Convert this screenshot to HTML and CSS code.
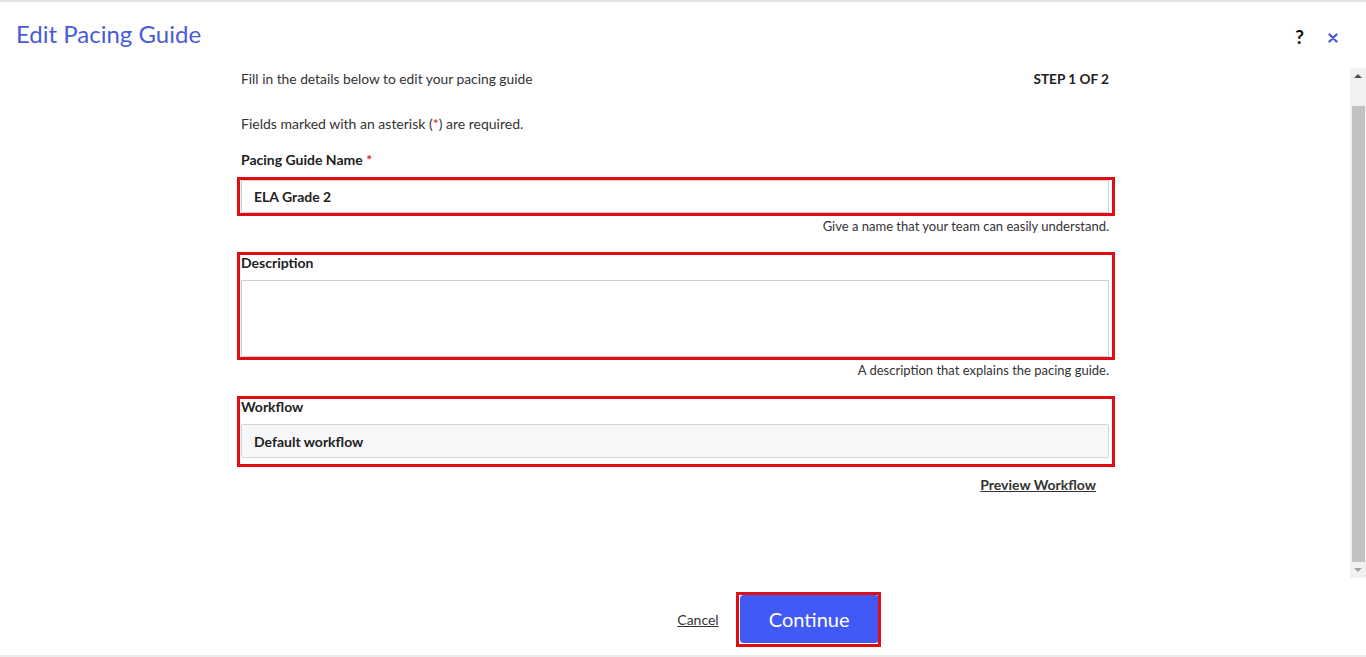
FILE: index.html
```html
<!DOCTYPE html>
<html lang="en">
<head>
    <meta charset="UTF-8">
    <title>Edit Pacing Guide</title>
    <link rel="stylesheet" href="styles.css">
</head>
<body>

<div class="modal">
    <header class="modal-head">
        <h1>Edit Pacing Guide</h1>
        <div class="head-tools">
            <span class="help">?</span>
            <span class="close">
                <svg width="10" height="10" viewBox="0 0 10 10">
                    <path d="M1.5 1.5 L8.5 8.5 M8.5 1.5 L1.5 8.5" stroke="#4a5bd8" stroke-width="2.4" stroke-linecap="round"/>
                </svg>
            </span>
        </div>
    </header>

    <div class="modal-body">
        <div class="scroll-pane">
            <form class="form">
                <div class="intro">
                    <span>Fill in the details below to edit your pacing guide</span>
                    <strong>STEP 1 OF 2</strong>
                </div>
                <p class="required-note">Fields marked with an asterisk (<span class="req">*</span>) are required.</p>

                <label class="field-label first" for="name">Pacing Guide Name <span class="req">*</span></label>
                <div class="mark mark-name">
                    <input id="name" class="text-input" type="text" value="ELA Grade 2">
                </div>
                <p class="helper">Give a name that your team can easily understand.</p>

                <div class="mark mark-desc group">
                    <label class="field-label" for="desc">Description</label>
                    <textarea id="desc" class="text-area"></textarea>
                </div>
                <p class="helper">A description that explains the pacing guide.</p>

                <div class="mark mark-flow group">
                    <label class="field-label">Workflow</label>
                    <div class="select-box">Default workflow</div>
                </div>

                <div class="preview-row">
                    <a href="#" class="preview-link">Preview Workflow</a>
                </div>
            </form>
        </div>
        <div class="scrollbar">
            <div class="sb-btn"><span class="arrow-up"></span></div>
            <div class="sb-gap"></div>
            <div class="sb-thumb"></div>
            <div class="sb-btn"><span class="arrow-down"></span></div>
        </div>
    </div>

    <footer class="modal-foot">
        <a href="#" class="cancel-link">Cancel</a>
        <div class="mark mark-btn">
            <button class="btn-primary" type="button">Continue</button>
        </div>
    </footer>
</div>

</body>
</html>
```

FILE: styles.css
```css
body {
    margin: 0;
    font-family: Lato, "Open Sans", sans-serif;
    font-size: 14px;
    color: #333;
    background: #fff;
}
.modal {
    height: 657px;
    display: flex;
    flex-direction: column;
    border-top: 2px solid #e2e2e2;
    box-sizing: border-box;
}
.modal-head {
    height: 66px;
    flex: none;
    display: flex;
    justify-content: space-between;
    align-items: flex-start;
    padding: 0 28px 0 16px;
}
.modal-head h1 {
    margin: 0;
    padding-top: 17px;
    font-size: 24px;
    line-height: 30px;
    font-weight: 400;
    color: #4a5bd8;
}
.head-tools {
    display: flex;
    align-items: center;
    gap: 24px;
    padding-top: 22px;
    height: 26px;
}
.help {
    font-size: 19px;
    font-weight: 700;
    color: #111;
    line-height: 26px;
}
.close {
    display: flex;
    padding-top: 1px;
}

.modal-body {
    height: 510px;
    flex: none;
    display: flex;
}
.scroll-pane {
    flex: 1;
    overflow: hidden;
}
.form {
    width: 868px;
    margin: 0 auto;
    padding-top: 2px;
}
.intro {
    display: flex;
    justify-content: space-between;
    line-height: 18px;
}
.intro span {
    font-size: 13.8px;
}
.intro strong {
    font-size: 13.6px;
    color: #222;
}
.required-note {
    margin: 27px 0 0;
    line-height: 18px;
}
.req {
    color: #e0222a;
}
.field-label {
    display: block;
    font-weight: 700;
    line-height: 18px;
    color: #222;
}
.field-label.first {
    margin-top: 18px;
}
.mark {
    position: relative;
}
.mark::after {
    content: "";
    position: absolute;
    border: 3px solid #e00d12;
    pointer-events: none;
}
.mark-name {
    margin-top: 11px;
}
.mark-name::after {
    top: -3px;
    bottom: -3px;
    left: -4px;
    right: -6px;
}
.mark-desc::after {
    top: -2px;
    bottom: -3px;
    left: -4px;
    right: -6px;
}
.mark-flow::after {
    top: -2px;
    bottom: -9px;
    left: -4px;
    right: -6px;
}
.text-input {
    display: block;
    width: 100%;
    height: 33px;
    box-sizing: border-box;
    border: 1px solid #cfcfcf;
    padding: 0 12px;
    font-family: inherit;
    font-size: 14px;
    font-weight: 700;
    color: #222;
    outline: none;
}
.helper {
    margin: 5px 0 0;
    font-size: 13px;
    line-height: 16px;
    text-align: right;
    color: #333;
}
.group {
    margin-top: 20px;
}
.text-area {
    display: block;
    width: 100%;
    height: 77px;
    margin-top: 8px;
    box-sizing: border-box;
    border: 1px solid #cfcfcf;
    resize: none;
    font-family: inherit;
    outline: none;
}
.select-box {
    margin-top: 8px;
    height: 34px;
    box-sizing: border-box;
    border: 1px solid #d6d6d6;
    border-radius: 2px;
    background: #f6f7f9;
    padding: 0 12px;
    display: flex;
    align-items: center;
    font-weight: 700;
    color: #222;
}
.preview-row {
    margin-top: 18px;
    text-align: right;
    padding-right: 13px;
    line-height: 18px;
}
.preview-link {
    font-weight: 700;
    color: #333;
    text-decoration: underline;
}

.scrollbar {
    width: 16px;
    display: flex;
    flex-direction: column;
    background: #f1f1f1;
}
.sb-btn {
    height: 16px;
    display: flex;
    align-items: center;
    justify-content: center;
}
.sb-gap {
    height: 22px;
}
.sb-thumb {
    flex: 1;
    margin: 0 1px 0 2px;
    background: #c1c1c1;
}
.arrow-up {
    border-left: 4px solid transparent;
    border-right: 4px solid transparent;
    border-bottom: 4px solid #505050;
}
.arrow-down {
    border-left: 4px solid transparent;
    border-right: 4px solid transparent;
    border-top: 4px solid #a3a3a3;
}

.modal-foot {
    height: 79px;
    flex: none;
    box-sizing: border-box;
    border-bottom: 2px solid #ececec;
    display: flex;
    justify-content: center;
    align-items: flex-start;
    gap: 21px;
    padding: 17px 0 0 190px;
}
.cancel-link {
    font-size: 14px;
    line-height: 50px;
    color: #333;
    text-decoration: underline;
}
.btn-primary {
    display: block;
    width: 139px;
    height: 48px;
    border: none;
    border-radius: 4px;
    background: #4159f5;
    color: #fff;
    font-family: inherit;
    font-size: 20px;
}
.mark-btn::after {
    top: -3px;
    bottom: -4px;
    left: -4px;
    right: -2px;
}
```
